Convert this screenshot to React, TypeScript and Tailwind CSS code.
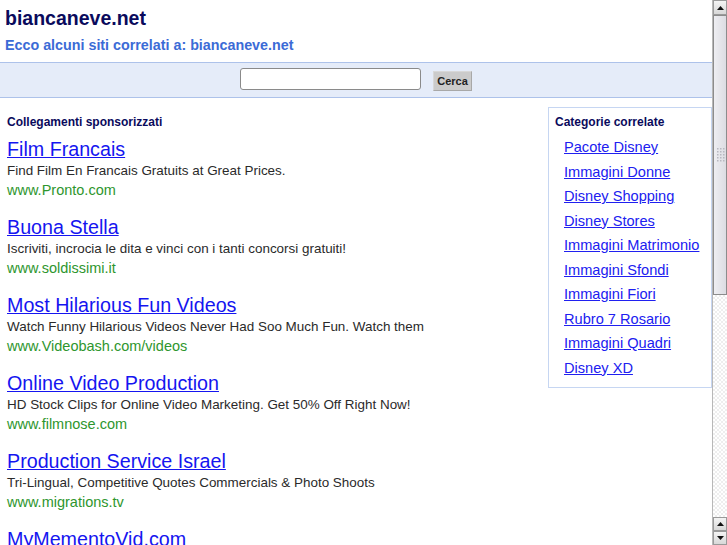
import React from "react";

const ads = [
  { t: "Film Francais", d: "Find Film En Francais Gratuits at Great Prices.", u: "www.Pronto.com" },
  { t: "Buona Stella", d: "Iscriviti, incrocia le dita e vinci con i tanti concorsi gratuiti!", u: "www.soldissimi.it" },
  { t: "Most Hilarious Fun Videos", d: "Watch Funny Hilarious Videos Never Had Soo Much Fun. Watch them", u: "www.Videobash.com/videos" },
  { t: "Online Video Production", d: "HD Stock Clips for Online Video Marketing. Get 50% Off Right Now!", u: "www.filmnose.com" },
  { t: "Production Service Israel", d: "Tri-Lingual, Competitive Quotes Commercials & Photo Shoots", u: "www.migrations.tv" },
  { t: "MyMementoVid.com", d: "Create a video memento of your loved ones today.", u: "www.mymementovid.com" },
];

const cats = [
  "Pacote Disney",
  "Immagini Donne",
  "Disney Shopping",
  "Disney Stores",
  "Immagini Matrimonio",
  "Immagini Sfondi",
  "Immagini Fiori",
  "Rubro 7 Rosario",
  "Immagini Quadri",
  "Disney XD",
];

function Arrow({ up }: { up: boolean }) {
  return (
    <svg width="7" height="4" viewBox="0 0 7 4">
      {up ? <polygon points="0,4 7,4 3.5,0" fill="#111" /> : <polygon points="0,0 7,0 3.5,4" fill="#111" />}
    </svg>
  );
}

function ScrollBar() {
  return (
    <div className="flex h-[545px] w-[15px] shrink-0 flex-col border-l border-[#b8b8b8] bg-white">
      <div className="flex h-[15px] shrink-0 items-center justify-center border border-[#9a9a9a] bg-gradient-to-b from-[#f4f4f4] to-[#d8d8d8]">
        <Arrow up />
      </div>
      <div className="flex h-[280px] shrink-0 flex-col items-center justify-center border border-[#8c8c8c] bg-gradient-to-r from-[#eeeef2] to-[#dcdce2]">
        <svg width="9" height="16" viewBox="0 0 9 16">
          {[0, 3, 6, 9, 12].map((y) =>
            [0, 3, 6].map((x) => <rect key={`${x}-${y}`} x={x + 1} y={y + 1} width="1.5" height="1.5" fill="#b8b8c0" />)
          )}
        </svg>
      </div>
      <div className="flex-1 bg-[repeating-conic-gradient(#eeeeee_0%_25%,#ffffff_0%_50%)] bg-[length:4px_4px]" />
      <div className="flex h-[14px] shrink-0 items-center justify-center border border-[#9a9a9a] bg-gradient-to-b from-[#f4f4f4] to-[#d8d8d8]">
        <Arrow up />
      </div>
      <div className="flex h-[14px] shrink-0 items-center justify-center border border-[#9a9a9a] bg-gradient-to-b from-[#f4f4f4] to-[#d8d8d8]">
        <Arrow up={false} />
      </div>
    </div>
  );
}

export default function App() {
  return (
    <div className="flex h-[545px] w-[727px] overflow-hidden bg-white font-['Liberation_Sans',Arial,sans-serif]">
      <div className="flex w-[712px] shrink-0 flex-col">
        <div className="shrink-0 pl-[5px] pt-[5px]">
          <h1 className="text-[19.5px] font-bold leading-[26px] text-[#0a0a5c]">biancaneve.net</h1>
          <h2 className="mt-[4px] text-[14.3px] font-bold leading-[20px] text-[#3b6bd6]">
            Ecco alcuni siti correlati a: biancaneve.net
          </h2>
        </div>
        <div className="mt-[7px] flex h-[36px] shrink-0 items-start justify-center gap-[12px] border-y border-[#adc2ea] bg-[#e5ecf9]">
          <input
            type="text"
            className="mt-[5px] h-[22px] w-[181px] rounded-[3px] border border-[#8a8a8a] bg-white outline-none"
          />
          <button className="mt-[8px] h-[20px] w-[39px] border border-[#d8d8d8] border-b-[#a8a8a8] border-r-[#a8a8a8] bg-[#cbcbcb] text-[11px] font-bold leading-[18px] text-[#222]">
            Cerca
          </button>
        </div>
        <div className="flex shrink-0">
          <div className="flex-1 pl-[7px] pt-[16px]">
            <div className="text-[12px] font-bold leading-[16px] text-[#0a0a5c]">Collegamenti sponsorizzati</div>
            <div className="mt-[7px] flex flex-col">
              {ads.map((a) => (
                <div key={a.t} className="mb-[15px] shrink-0">
                  <a href="#" className="block text-[19.7px] leading-[24px] text-[#1515f0] underline">
                    {a.t}
                  </a>
                  <div className="text-[13.45px] leading-[19px] text-[#2a2a2a]">{a.d}</div>
                  <div className="text-[14.5px] leading-[20px] text-[#2e962e]">{a.u}</div>
                </div>
              ))}
            </div>
          </div>
          <div className="mt-[9px] h-[281px] w-[164px] self-start border border-[#c6d6f2] px-[6px] pt-[6px]">
            <div className="text-[12px] font-bold leading-[16px] text-[#0a0a5c]">Categorie correlate</div>
            <div className="mt-[5px] flex flex-col pl-[9px]">
              {cats.map((c) => (
                <a key={c} href="#" className="block text-[14.6px] leading-[24.5px] text-[#2020f0] underline">
                  {c}
                </a>
              ))}
            </div>
          </div>
        </div>
      </div>
      <ScrollBar />
    </div>
  );
}
